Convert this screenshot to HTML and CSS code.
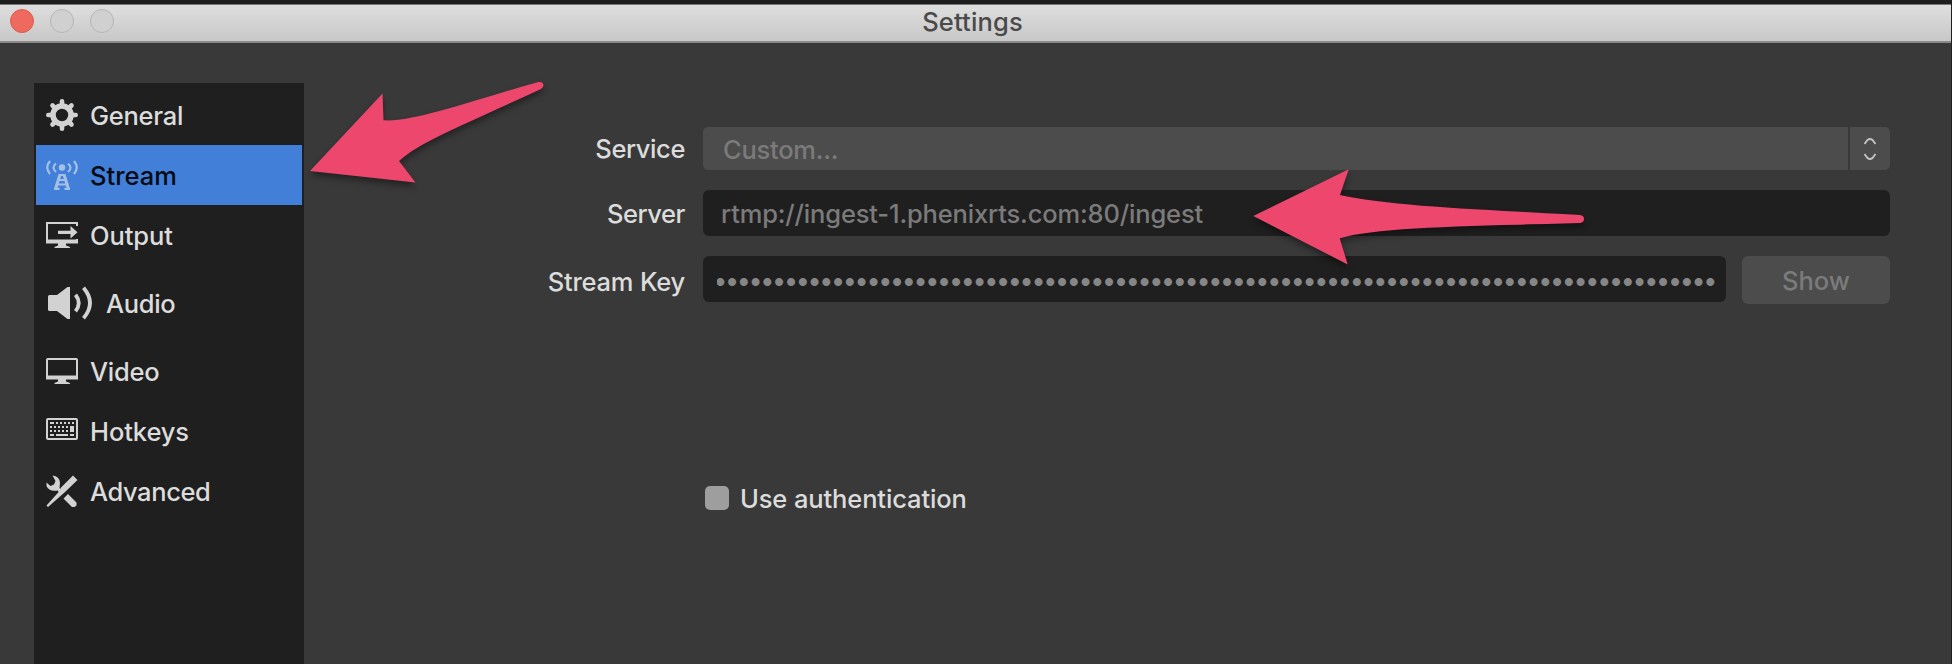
FILE: index.html
```html
<!DOCTYPE html>
<html lang="en">
<head>
<meta charset="utf-8">
<title>Settings</title>
<link rel="stylesheet" href="styles.css">
</head>
<body>
<div class="window">
  <header class="titlebar">
    <div class="lights"><i class="light close"></i><i class="light"></i><i class="light"></i></div>
    <h1 class="title">Settings</h1>
  </header>
  <main class="content">
    <nav class="sidebar">
      <a class="item">
        <svg class="icon" viewBox="0 0 32 32" width="32" height="32"><g stroke="currentColor" stroke-width="4.600" stroke-linecap="round"><path d="M16 2.300V6M16 26v3.700M2.300 16H6M26 16h3.700M6.500 6.500l3 3M22.500 22.500l3 3M25.500 6.500l-3 3M9.500 22.500l-3 3"/></g><circle cx="16" cy="16" r="9" fill="none" stroke="currentColor" stroke-width="5.600"/></svg>
        <span class="text w-general">General</span></a>
      <a class="item selected">
        <svg class="icon" viewBox="0 0 32 32" width="32" height="32"><g fill="none" stroke="currentColor" stroke-width="2.200"><path d="M4 2Q-1.500 8.500 4 15M28 2q5.500 6.500 0 13M10 4.500Q5 8.500 10 13M22 4.500q5 4 0 8.500"/><path d="M14 15.500 9.500 30M18 15.500 22.500 30" stroke-width="3"/><path d="M13 16h6M12 21h8M11 25.500h10M8 29.800h5.500M18.500 29.800H24" stroke-width="2.200"/></g><circle cx="16" cy="8.500" r="3.200" fill="currentColor"/></svg>
        <span class="text w-stream">Stream</span></a>
      <a class="item">
        <svg class="icon" viewBox="0 0 32 32" width="32" height="32"><path d="M31 7V4H1v19h30v-3" fill="none" stroke="currentColor" stroke-width="2"/><path d="M0 20.500h32V24.500H0zM12 24h8v2.500l4 1.500v1H8.500v-1L12 26.500zM12 11.800h12.500V7l7 6.300-7 6.300V15H12z" fill="currentColor"/></svg>
        <span class="text w-output">Output</span></a>
      <a class="item tall">
        <svg class="icon" viewBox="0 0 48 36" width="48" height="36"><path d="M2 11.500Q2 10 3.500 10H11L21.500 2H24V34H21.500L11 26H3.500Q2 26 2 24.500z" fill="currentColor"/><path d="M29.500 9.800Q36 18 29.500 26.200M37.500 2.800Q50.500 18 37.500 33.200" fill="none" stroke="currentColor" stroke-width="3.800"/></svg>
        <span class="text w-audio">Audio</span></a>
      <a class="item">
        <svg class="icon" viewBox="0 0 32 32" width="32" height="32"><rect x="1" y="4" width="30" height="19" rx=".8" fill="none" stroke="currentColor" stroke-width="2"/><path d="M0 20.500h32V24.500H0zM12 24h8v2.500l4 1.500v1H8.500v-1L12 26.500z" fill="currentColor"/></svg>
        <span class="text w-video">Video</span></a>
      <a class="item">
        <svg class="icon" viewBox="0 0 32 32" width="32" height="32"><rect x="1" y="4" width="30" height="20" rx="1" fill="none" stroke="currentColor" stroke-width="2"/><g stroke="currentColor" stroke-width="2" fill="none"><path d="M4 8h4M10 8h2M14 8h2M18 8h2M22 8h2M26 8h2M4 12h2M8 12h2M12 12h2M16 12h2M20 12h2M4 16h2M8 16h2M12 16h2M16 16h2M20 16h2M4 20h4M10 20h12M24 20h4"/><path d="M26 11v6" stroke-width="4"/></g></svg>
        <span class="text w-hotkeys">Hotkeys</span></a>
      <a class="item">
        <svg class="icon" viewBox="0 0 32 32" width="32" height="32"><path d="M27 .5 31.500 5 18.500 17.500 2 32 .5 30.500 14 15.500 14.500 13zM22 19l8.500 8.500v3l-2 1.500H26L17.500 23.500z" fill="currentColor"/><path d="M6.500 .5Q13.500 1 14 8L13.500 13 16.500 16.500 13.500 18 11.500 15.500Q3 17 .5 11V7.500L4.500 11 8 9.500 9.500 6z" fill="currentColor"/></svg>
        <span class="text w-advanced">Advanced</span></a>
    </nav>
    <form class="form">
      <div class="row service">
        <label class="label w-service">Service</label>
        <div class="combo"><span class="combo-value">Custom...</span>
          <span class="stepper"><svg width="14" height="24" viewBox="0 0 14 24"><path d="M1.500 7 4.500 3Q7 1 9.500 3l3 4M1.500 17l3 4Q7 23 9.500 21l3-4" fill="none" stroke="#c4c4c4" stroke-width="1.800"/></svg></span></div>
      </div>
      <div class="row server">
        <label class="label w-server">Server</label>
        <div class="field"><span class="w-url">rtmp://ingest-1.phenixrts.com:80/ingest</span></div>
      </div>
      <div class="row key">
        <label class="label w-key">Stream Key</label>
        <div class="field secret"><span class="dots">•••••••••••••••••••••••••••••••••••••••••••••••••••••••••••••••••••••••••••••••••••••</span></div>
        <button type="button" class="show">Show</button>
      </div>
      <div class="row auth"><i class="checkbox"></i><label class="w-auth">Use authentication</label></div>
    </form>
  </main>
</div>
<svg class="arrows" viewBox="0 0 1952 664" width="1952" height="664">
  <path d="M310 171 382.500 93.500 383.500 120.300C413 122 458 105 538.500 82Q543 81.500 543.500 85 543.500 87.500 541 89C470 122 419 142 399 161L415.500 182.500z"/>
  <path d="M1253.300 216 1348.700 169.300 1340 195C1390 206 1470 209 1580 215Q1584 215.500 1584 219 1584 222.500 1580 223C1470 226 1375 227 1339.700 238.300L1347.700 264.500z"/>
</svg>
</body>
</html>
```
FILE: styles.css
```css
* { box-sizing: border-box; }
body {
  margin: 0;
  height: 664px;
  overflow: hidden;
  background: #1e1e1f;
  font-family: Inter, "Liberation Sans", sans-serif;
  font-size: 25.5px;
  font-weight: 500;
  line-height: 30px;
  color: #dcdcdc;
  padding: 4px 1px 0 0;
}
.window { height: 660px; background: #393939; display: flex; flex-direction: column; }
.titlebar {
  height: 39px;
  flex: none;
  display: grid;
  grid-template-columns: 1fr auto 1fr;
  background: linear-gradient(#dedede, #c8c8c8);
  border-top: 1px solid #777;
  border-bottom: 2px solid #8a8a8a;
}
.lights { display: flex; gap: 16px; padding: 4px 0 0 10px; }
.light { width: 24px; height: 24px; border-radius: 50%; border: 1.5px solid #b6b6b6; background: #d0d0d0; }
.close { background: #ee6a5f; border-color: #dc5a50; }
.title { margin: 2px 0 0 -6px; font-size: 25.5px; font-weight: 450; color: #4a4a4a; letter-spacing: .15px; }
.content { flex: 1; display: flex; padding-top: 40px; padding-left: 34px; min-height: 0; }
.sidebar { width: 270px; flex: none; background: #1f1f1f; padding: 2px 2px 0; }
.item { display: flex; align-items: center; gap: 12px; height: 60px; padding-left: 10px; }
.item.tall { height: 76px; }
.text { padding-top: 1px; }
.icon { flex: none; color: #d2d2d2; }
.selected { background: #417fd8; color: #050a12; }
.selected .icon { color: #a5c0e4; }
.w-general { letter-spacing: -.27px; }
.w-output { letter-spacing: -.1px; }
.w-audio { letter-spacing: -.35px; }
.w-video { letter-spacing: -.25px; }
.w-hotkeys { letter-spacing: -.1px; }
.w-advanced { letter-spacing: -.4px; }
.w-service { letter-spacing: -.4px; }
.w-server { letter-spacing: -.45px; }
.w-key { letter-spacing: -.2px; }
.w-url { letter-spacing: -.16px; }
.w-auth { letter-spacing: -.12px; padding-top: 2px; }
.form { flex: 1; min-width: 0; padding: 44px 61px 0 0; }
.row { display: flex; align-items: center; }
.label { width: 381px; margin-right: 18px; padding-top: 1px; text-align: right; flex: none; }
.combo { flex: 1; height: 43px; display: flex; gap: 2px; color: #7b7b7b; }
.combo-value { flex: 1; background: #4c4c4c; border-radius: 5px 0 0 5px; padding: 8px 0 0 20px; letter-spacing: -.25px; }
.stepper { width: 40px; background: #4c4c4c; border-radius: 0 5px 5px 0; display: flex; align-items: center; justify-content: center; }
.server { margin-top: 20px; }
.field { flex: 1; min-width: 0; height: 46px; background: #1f1f1f; border-radius: 6px; color: #7b7b7b; padding: 9px 0 0 18px; white-space: nowrap; }
.key { margin-top: 20px; height: 48px; align-items: flex-start; }
.key .label { padding-top: 11px; }
.secret { padding-left: 0; }
.dots { display: block; margin: 0 10px 0 14px; overflow: hidden; color: #868686; letter-spacing: -1.81px; text-indent: -3.6px; }
.show { width: 148px; height: 48px; margin-left: 16px; border: 0; border-radius: 6px; background: #4c4c4c; color: #7b7b7b; font: inherit; padding: 2px 0 0; }
.auth { margin-top: 179px; padding-left: 401px; gap: 11px; height: 30px; }
.checkbox { width: 24px; height: 24px; border-radius: 5px; background: #9e9e9e; }
.arrows { position: absolute; left: 0; top: 0; fill: #ed476e; filter: drop-shadow(0 4px 3px rgba(0, 0, 0, .4)); pointer-events: none; }
```
